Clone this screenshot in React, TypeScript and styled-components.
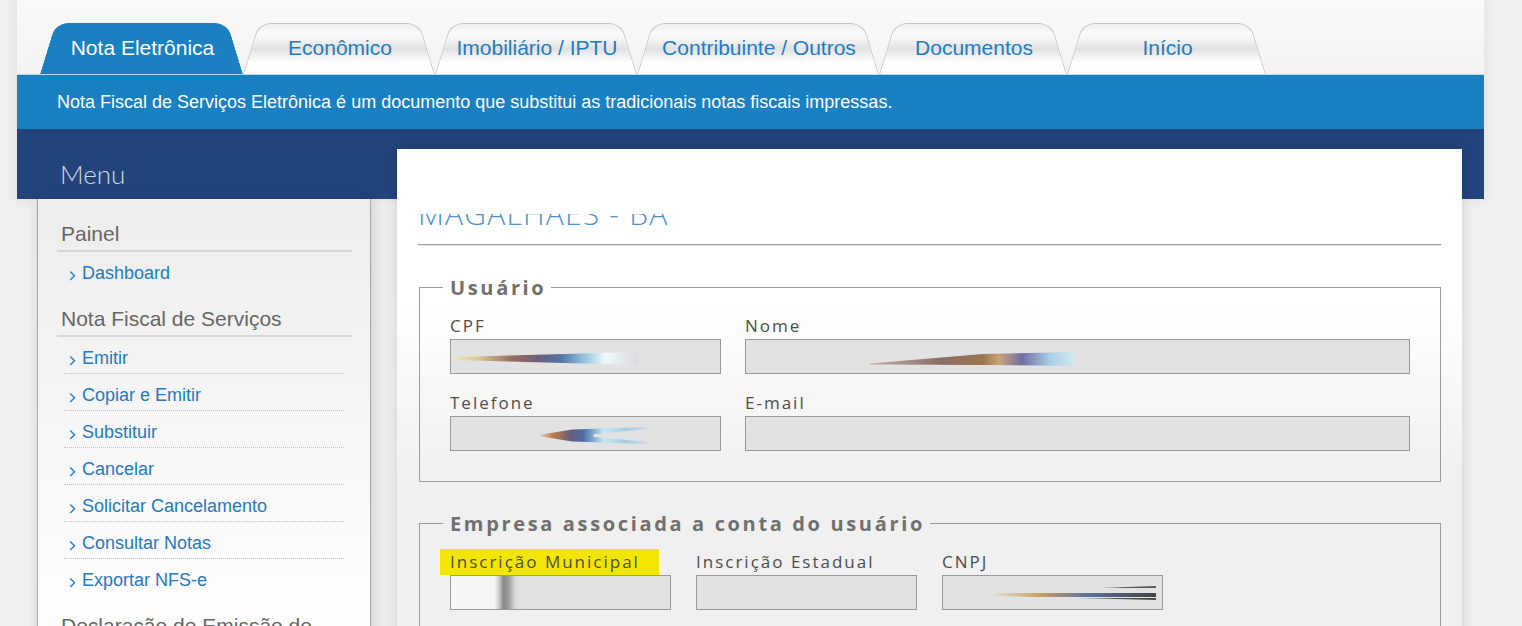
import React from 'react';
import styled, { createGlobalStyle } from 'styled-components';

const GlobalStyle = createGlobalStyle`
  html, body { margin: 0; padding: 0; overflow: hidden; }
  body {
    background: #efefef;
    font-family: "Liberation Sans", Arial, sans-serif;
  }
  *, *::before, *::after { box-sizing: border-box; }
`;

const Page = styled.div`
  width: 1467px;
  margin-left: 17px;
`;

const Header = styled.header`
  background: linear-gradient(#f9f9f9, #f3f3f3 75px);
  box-shadow: 0 0 10px rgba(0, 0, 0, 0.08);
`;

const TabRow = styled.nav`
  display: flex;
  align-items: flex-end;
  height: 75px;
  padding-left: 23px;
  border-bottom: 1px solid #c3d8e7;
`;

const inactiveTabBg =
  'linear-gradient(to bottom, #efefef 0%, #fafafa 20%, #f0f0f0 36%, #e1e1e1 50%, #f2f2f2 64%, #ffffff 78%, #ffffff 100%)';

const Tab = styled.a<{ $active?: boolean; $width: number }>`
  position: relative;
  isolation: isolate;
  flex: none;
  width: ${(p) => p.$width}px;
  height: 51px;
  display: flex;
  align-items: center;
  justify-content: center;
  padding: 0 0 2px 2px;
  font-size: 21px;
  color: ${(p) => (p.$active ? '#ffffff' : '#1f7cc5')};
  text-decoration: none;
  white-space: nowrap;
  z-index: ${(p) => (p.$active ? 2 : 1)};

  &::before,
  &::after {
    content: '';
    position: absolute;
    top: 0;
    bottom: 0;
    z-index: -1;
    background: ${(p) => (p.$active ? '#1a80c2' : inactiveTabBg)};
    border-top: 1px solid ${(p) => (p.$active ? '#1a80c2' : '#c4c4c4')};
  }
  &::before {
    left: 0;
    right: 40%;
    border-left: 1px solid ${(p) => (p.$active ? '#1a80c2' : '#c4c4c4')};
    border-top-left-radius: 12px;
    transform: skewX(-17deg);
    transform-origin: left bottom;
  }
  &::after {
    left: 40%;
    right: 0;
    border-right: 1px solid ${(p) => (p.$active ? '#1a80c2' : '#c4c4c4')};
    border-top-right-radius: 12px;
    transform: skewX(17deg);
    transform-origin: right bottom;
  }
`;

const InfoBar = styled.div`
  height: 54px;
  display: flex;
  align-items: center;
  padding: 1px 0 0 40px;
  background: #1980c2;
  color: #ffffff;
  font-size: 18px;
`;

const MenuBar = styled.div`
  height: 70px;
  padding: 30px 0 0 43px;
  background: #22437b;
`;

const MenuTitle = styled.h2`
  margin: 0;
  font: 300 26px/31px Lato, "Open Sans", sans-serif;
  color: #d3d9e3;
`;

const Body = styled.div`
  display: flex;
  align-items: flex-start;
  gap: 26px;
  padding-left: 20px;
`;

const Sidebar = styled.aside`
  flex: none;
  width: 334px;
  min-height: 620px;
  padding: 5px 0 40px;
  background: linear-gradient(#ededed, #fdfdfd 400px);
  border-left: 1px solid #a9a9a9;
  border-right: 1px solid #a9a9a9;
  box-shadow: 2px 0 12px rgba(0, 0, 0, 0.14);
`;

const MenuSection = styled.section`
  margin: 18px 18px 0 19px;
`;

const SectionTitle = styled.h3`
  margin: 0;
  padding: 0 0 4px 4px;
  font-size: 21px;
  line-height: 24px;
  font-weight: normal;
  color: #666666;
  border-bottom: 2px solid #d6d6d6;
`;

const LinkList = styled.ul`
  list-style: none;
  margin: 0 8px 0 7px;
  padding: 0;
`;

const LinkItem = styled.li`
  border-bottom: 1px dotted #c2c2c2;
  &:last-child {
    border-bottom-color: transparent;
  }
`;

const MenuLink = styled.a`
  display: flex;
  align-items: center;
  gap: 6px;
  padding: 11px 0 4px 5px;
  font-size: 18px;
  line-height: 21px;
  color: #2479c3;
  text-decoration: none;
`;

const Chevron = styled.svg`
  flex: none;
  width: 7px;
  height: 11px;
  margin-top: 4px;
`;

const Main = styled.main`
  position: relative;
  flex: none;
  width: 1065px;
  min-height: 620px;
  margin-top: -50px;
  padding: 64px 21px 40px;
  background: linear-gradient(#ffffff 0, #ffffff 150px, #f0f0f0 330px);
  box-shadow: 0 0 12px rgba(0, 0, 0, 0.13);
`;

const LogoClip = styled.div`
  height: 13px;
  margin-top: 1px;
  overflow: hidden;
  display: flex;
  align-items: flex-end;
`;

const LogoText = styled.div`
  font: 300 30px/27px "Open Sans", sans-serif;
  letter-spacing: 1.2px;
  color: #4b91cd;
  white-space: nowrap;
`;

const Rule = styled.div`
  height: 0;
  margin-top: 17px;
  border-top: 1px solid #9c9c9c;
  border-bottom: 1px solid #e8e8e8;
`;

const Fieldset = styled.fieldset`
  margin: 28px 0 0 1px;
  padding: 13px 30px 30px;
  border: 1px solid #9b9b9b;
  min-width: 0;
`;

const Legend = styled.legend`
  margin-left: -7px;
  padding: 0 5px 0 7px;
  font: bold 20px/27px "Open Sans", sans-serif;
  letter-spacing: 2.65px;
  color: #707070;
`;

const FieldGrid = styled.div<{ $columns: string; $gap: number }>`
  display: grid;
  grid-template-columns: ${(p) => p.$columns};
  column-gap: ${(p) => p.$gap}px;
  row-gap: 17px;
`;

const Field = styled.div`
  display: flex;
  flex-direction: column;
  align-items: flex-start;
`;

const FieldLabel = styled.label<{ $highlight?: boolean }>`
  display: block;
  font: 17px/23px "Open Sans", sans-serif;
  letter-spacing: 2px;
  color: #4d4d4d;
  margin: ${(p) => (p.$highlight ? '-1px 0 0 -10px' : '0 0 2px')};
  padding: ${(p) => (p.$highlight ? '1px 19px 2px 10px' : '0')};
  background: ${(p) => (p.$highlight ? '#f2e600' : 'transparent')};
`;

const InputBox = styled.div`
  align-self: stretch;
  height: 35px;
  display: flex;
  align-items: flex-start;
  overflow: hidden;
  background: #e2e2e2;
  border: 1px solid #999999;
`;

const Smear = styled.span<{
  $left: number;
  $top: number;
  $width: number;
  $height: number;
  $bg: string;
  $clip?: string;
}>`
  flex: none;
  display: block;
  margin-left: ${(p) => p.$left}px;
  margin-top: ${(p) => p.$top}px;
  width: ${(p) => p.$width}px;
  height: ${(p) => p.$height}px;
  background: ${(p) => p.$bg};
  clip-path: ${(p) => p.$clip ?? 'none'};
`;

type SmearSpec = {
  left: number;
  top: number;
  width: number;
  height: number;
  bg: string;
  clip?: string;
};

const tabs = [
  { label: 'Nota Eletrônica', width: 203, active: true },
  { label: 'Econômico', width: 192 },
  { label: 'Imobiliário / IPTU', width: 202 },
  { label: 'Contribuinte / Outros', width: 242 },
  { label: 'Documentos', width: 188 },
  { label: 'Início', width: 199 },
];

const sections = [
  { title: 'Painel', items: ['Dashboard'] },
  {
    title: 'Nota Fiscal de Serviços',
    items: [
      'Emitir',
      'Copiar e Emitir',
      'Substituir',
      'Cancelar',
      'Solicitar Cancelamento',
      'Consultar Notas',
      'Exportar NFS-e',
    ],
  },
  {
    title: 'Declaração de Emissão de Documentos',
    items: ['Declarar', 'Consultar Declarações'],
  },
];

const smears: Record<string, SmearSpec> = {
  cpf: {
    left: 4,
    top: 12,
    width: 183,
    height: 13,
    bg: 'linear-gradient(90deg, rgba(236,230,170,0.9) 0%, #d9cc9a 12%, #9a6a5c 32%, #6f5f78 45%, #5574a5 58%, #8fc0dc 70%, #eef8fb 82%, #dcdcdc 100%)',
    clip: 'polygon(0 38%, 100% 0, 100% 100%, 0 62%)',
  },
  nome: {
    left: 124,
    top: 12,
    width: 205,
    height: 14,
    bg: 'linear-gradient(90deg, rgba(140,100,90,0.4) 0%, #8a6e66 35%, #9d7550 55%, #caa27a 63%, #7070a2 74%, #a7d0e6 88%, rgba(205,240,240,0.5) 100%)',
    clip: 'polygon(0 82%, 55% 15%, 100% 0, 100% 100%, 55% 92%, 0 90%)',
  },
  telefone: {
    left: 89,
    top: 10,
    width: 107,
    height: 17,
    bg: 'linear-gradient(90deg, rgba(220,170,110,0.3) 0%, #b97f4b 12%, #6b5d7a 28%, #4a6ea6 40%, #c3e8f3 60%, #a6cbe2 80%, #c9dbe8 100%)',
    clip: 'polygon(0 45%, 30% 15%, 100% 0, 100% 12%, 50% 42%, 50% 58%, 100% 88%, 100% 100%, 30% 85%, 0 55%)',
  },
  municipal: {
    left: 0,
    top: 0,
    width: 70,
    height: 33,
    bg: 'linear-gradient(90deg, #f6f6f6 0%, #f6f6f6 62%, #cfcfcf 68%, #8a8a8a 75%, #9c9c9c 82%, #dadada 92%, #e2e2e2 100%)',
  },
  cnpj: {
    left: 47,
    top: 10,
    width: 166,
    height: 14,
    bg: 'linear-gradient(90deg, rgba(200,180,140,0) 0%, #b09080 35%, #bfe3ee 60%, #555 80%, #555 100%) top / 100% 2px no-repeat, linear-gradient(90deg, rgba(230,200,120,0) 0%, #c9a060 30%, #5a6f9a 60%, #444 100%) 0 7px / 100% 4px no-repeat, linear-gradient(90deg, rgba(0,0,0,0) 0%, #666 60%, #444 100%) bottom / 100% 2px no-repeat',
    clip: 'polygon(0 40%, 100% 0, 100% 100%, 0 70%)',
  },
};

type FieldSpec = { label: string; smear?: SmearSpec; highlight?: boolean };

const userFields: FieldSpec[] = [
  { label: 'CPF', smear: smears.cpf },
  { label: 'Nome', smear: smears.nome },
  { label: 'Telefone', smear: smears.telefone },
  { label: 'E-mail' },
];

const companyFields: FieldSpec[] = [
  { label: 'Inscrição Municipal', smear: smears.municipal, highlight: true },
  { label: 'Inscrição Estadual' },
  { label: 'CNPJ', smear: smears.cnpj },
];

function FormField({ field }: { field: FieldSpec }) {
  const s = field.smear;
  return (
    <Field>
      <FieldLabel $highlight={field.highlight}>{field.label}</FieldLabel>
      <InputBox>
        {s && (
          <Smear
            $left={s.left}
            $top={s.top}
            $width={s.width}
            $height={s.height}
            $bg={s.bg}
            $clip={s.clip}
          />
        )}
      </InputBox>
    </Field>
  );
}

export default function App() {
  return (
    <>
      <GlobalStyle />
      <Page>
        <Header>
          <TabRow>
            {tabs.map((t) => (
              <Tab key={t.label} $active={t.active} $width={t.width} href="#">
                {t.label}
              </Tab>
            ))}
          </TabRow>
          <InfoBar>
            Nota Fiscal de Serviços Eletrônica é um documento que substitui as tradicionais notas
            fiscais impressas.
          </InfoBar>
          <MenuBar>
            <MenuTitle>Menu</MenuTitle>
          </MenuBar>
        </Header>
        <Body>
          <Sidebar>
            {sections.map((sec) => (
              <MenuSection key={sec.title}>
                <SectionTitle>{sec.title}</SectionTitle>
                <LinkList>
                  {sec.items.map((item) => (
                    <LinkItem key={item}>
                      <MenuLink href="#">
                        <Chevron viewBox="0 0 7 11">
                          <polyline
                            points="1.2,1.5 5.5,5.8 1.2,10"
                            fill="none"
                            stroke="#2a83c8"
                            strokeWidth="1.5"
                          />
                        </Chevron>
                        {item}
                      </MenuLink>
                    </LinkItem>
                  ))}
                </LinkList>
              </MenuSection>
            ))}
          </Sidebar>
          <Main>
            <LogoClip>
              <LogoText>MAGALHÃES - BA</LogoText>
            </LogoClip>
            <Rule />
            <Fieldset>
              <Legend>Usuário</Legend>
              <FieldGrid $columns="271px 665px" $gap={24}>
                {userFields.map((f) => (
                  <FormField key={f.label} field={f} />
                ))}
              </FieldGrid>
            </Fieldset>
            <Fieldset>
              <Legend>Empresa associada a conta do usuário</Legend>
              <FieldGrid $columns="221px 221px 221px" $gap={25}>
                {companyFields.map((f) => (
                  <FormField key={f.label} field={f} />
                ))}
              </FieldGrid>
              <FieldGrid $columns="1fr" $gap={25} style={{ marginTop: 17 }}>
                <FormField field={{ label: 'Razão Social' }} />
              </FieldGrid>
            </Fieldset>
          </Main>
        </Body>
      </Page>
    </>
  );
}
